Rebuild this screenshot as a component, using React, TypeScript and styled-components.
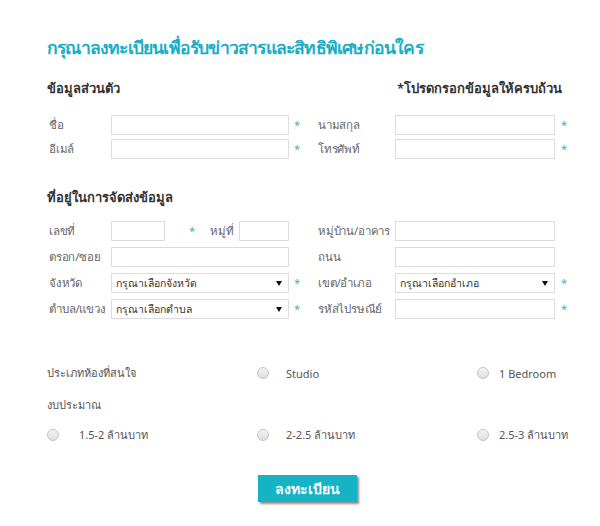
import styled, { createGlobalStyle } from "styled-components";

const GlobalStyle = createGlobalStyle`
  body {
    margin: 0;
    background: #ffffff;
    font-family: "Noto Sans", Roboto, "Open Sans", sans-serif;
    color: #555;
  }
  * {
    box-sizing: border-box;
  }
`;

const Page = styled.div`
  width: 600px;
  height: 526px;
  padding: 33px 35px 0 47px;
  display: flex;
  flex-direction: column;
`;

const Title = styled.h1`
  margin: 0;
  font-size: 17.5px;
  line-height: 28px;
  font-weight: 700;
  color: #17aec6;
  letter-spacing: -0.8px;
  white-space: nowrap;
`;

const SectionHead = styled.div<{ $top: number }>`
  display: flex;
  justify-content: space-between;
  margin-top: ${(p) => p.$top}px;
  height: 20px;
  align-items: center;
  padding-right: 3px;
`;

const HeadText = styled.h2`
  margin: 0;
  font-size: 13px;
  font-weight: 600;
  color: #333;
  white-space: nowrap;
`;

const FieldGrid = styled.div<{ $top: number; $gap: number }>`
  display: grid;
  grid-template-columns: 64px 178px 27px 79px 160px auto;
  grid-auto-rows: 20px;
  row-gap: ${(p) => p.$gap}px;
  margin-top: ${(p) => p.$top}px;
  align-items: center;
`;

const Label = styled.label`
  font-size: 11.5px;
  letter-spacing: -0.2px;
  color: #666;
  padding-left: 2px;
  white-space: nowrap;
`;

const TextInput = styled.input<{ $w?: number }>`
  width: ${(p) => (p.$w ? `${p.$w}px` : "100%")};
  height: 20px;
  border: 1px solid #dcdcdc;
  background: #fff;
  padding: 0 4px;
  font-size: 11px;
  outline: none;
`;

const SelectBox = styled.div`
  height: 20px;
  border: 1px solid #dcdcdc;
  background: #fff;
  display: flex;
  align-items: center;
  justify-content: space-between;
  padding: 0 6px 0 4px;
  font-size: 10.5px;
  color: #333;
  white-space: nowrap;
`;

const Arrow = styled.span`
  width: 0;
  height: 0;
  border-left: 3px solid transparent;
  border-right: 3px solid transparent;
  border-top: 5px solid #111;
`;

const Star = styled.span<{ $ml?: number }>`
  color: #27bdd6;
  font-size: 11px;
  margin-left: ${(p) => p.$ml ?? 5}px;
  align-self: start;
  padding-top: 2px;
`;

const Split = styled.div`
  display: flex;
  align-items: center;
`;

const SubLabel = styled.span`
  font-size: 11.5px;
  color: #666;
  margin: 0 5px 0 15px;
  white-space: nowrap;
`;

const ChoiceGrid = styled.div`
  display: grid;
  grid-template-columns: 210px 220px auto;
  margin-top: 44px;
  font-size: 11px;
  color: #555;
  white-space: nowrap;
`;

const ChoiceRow = styled.div<{ $h: number }>`
  height: ${(p) => p.$h}px;
  display: flex;
  align-items: center;
`;

const Wide = styled(ChoiceRow)`
  grid-column: 1 / -1;
`;

const Radio = styled.span<{ $gap: number }>`
  width: 12px;
  height: 12px;
  border-radius: 50%;
  border: 1px solid #c4c4c4;
  background: linear-gradient(#f4f4f4, #dedede);
  margin-right: ${(p) => p.$gap}px;
  flex-shrink: 0;
`;

const ButtonWrap = styled.div`
  display: flex;
  justify-content: center;
  margin-top: 32px;
`;

const Submit = styled.button`
  width: 99px;
  height: 27px;
  border: none;
  background: #16b3c5;
  color: #fff;
  font-family: inherit;
  font-size: 14px;
  font-weight: 700;
  box-shadow: 2px 2px 2px rgba(0, 0, 0, 0.45);
  cursor: pointer;
  margin-left: 3px;
`;

export default function App() {
  return (
    <>
      <GlobalStyle />
      <Page>
        <Title>กรุณาลงทะเบียนเพื่อรับข่าวสารและสิทธิพิเศษก่อนใคร</Title>

        <SectionHead $top={17}>
          <HeadText>ข้อมูลส่วนตัว</HeadText>
          <HeadText>*โปรดกรอกข้อมูลให้ครบถ้วน</HeadText>
        </SectionHead>

        <FieldGrid $top={17} $gap={4}>
          <Label>ชื่อ</Label>
          <TextInput />
          <Star>*</Star>
          <Label>นามสกุล</Label>
          <TextInput />
          <Star $ml={6}>*</Star>

          <Label>อีเมล์</Label>
          <TextInput />
          <Star>*</Star>
          <Label>โทรศัพท์</Label>
          <TextInput />
          <Star $ml={6}>*</Star>
        </FieldGrid>

        <SectionHead $top={28}>
          <HeadText>ที่อยู่ในการจัดส่งข้อมูล</HeadText>
        </SectionHead>

        <FieldGrid $top={14} $gap={6}>
          <Label>เลขที่</Label>
          <Split>
            <TextInput $w={54} />
            <Star $ml={24}>*</Star>
            <SubLabel>หมู่ที่</SubLabel>
            <TextInput $w={50} />
          </Split>
          <span />
          <Label>หมู่บ้าน/อาคาร</Label>
          <TextInput />
          <span />

          <Label>ตรอก/ซอย</Label>
          <TextInput />
          <span />
          <Label>ถนน</Label>
          <TextInput />
          <span />

          <Label>จังหวัด</Label>
          <SelectBox>
            กรุณาเลือกจังหวัด
            <Arrow />
          </SelectBox>
          <Star>*</Star>
          <Label>เขต/อำเภอ</Label>
          <SelectBox>
            กรุณาเลือกอำเภอ
            <Arrow />
          </SelectBox>
          <Star $ml={6}>*</Star>

          <Label>ตำบล/แขวง</Label>
          <SelectBox>
            กรุณาเลือกตำบล
            <Arrow />
          </SelectBox>
          <Star>*</Star>
          <Label>รหัสไปรษณีย์</Label>
          <TextInput />
          <Star $ml={6}>*</Star>
        </FieldGrid>

        <ChoiceGrid>
          <ChoiceRow $h={20}>ประเภทห้องที่สนใจ</ChoiceRow>
          <ChoiceRow $h={20}>
            <Radio $gap={17} />
            Studio
          </ChoiceRow>
          <ChoiceRow $h={20}>
            <Radio $gap={10} />1 Bedroom
          </ChoiceRow>

          <Wide $h={44}>งบประมาณ</Wide>

          <ChoiceRow $h={16}>
            <Radio $gap={20} />
            1.5-2 ล้านบาท
          </ChoiceRow>
          <ChoiceRow $h={16}>
            <Radio $gap={17} />
            2-2.5 ล้านบาท
          </ChoiceRow>
          <ChoiceRow $h={16}>
            <Radio $gap={10} />
            2.5-3 ล้านบาท
          </ChoiceRow>
        </ChoiceGrid>

        <ButtonWrap>
          <Submit>ลงทะเบียน</Submit>
        </ButtonWrap>
      </Page>
    </>
  );
}
